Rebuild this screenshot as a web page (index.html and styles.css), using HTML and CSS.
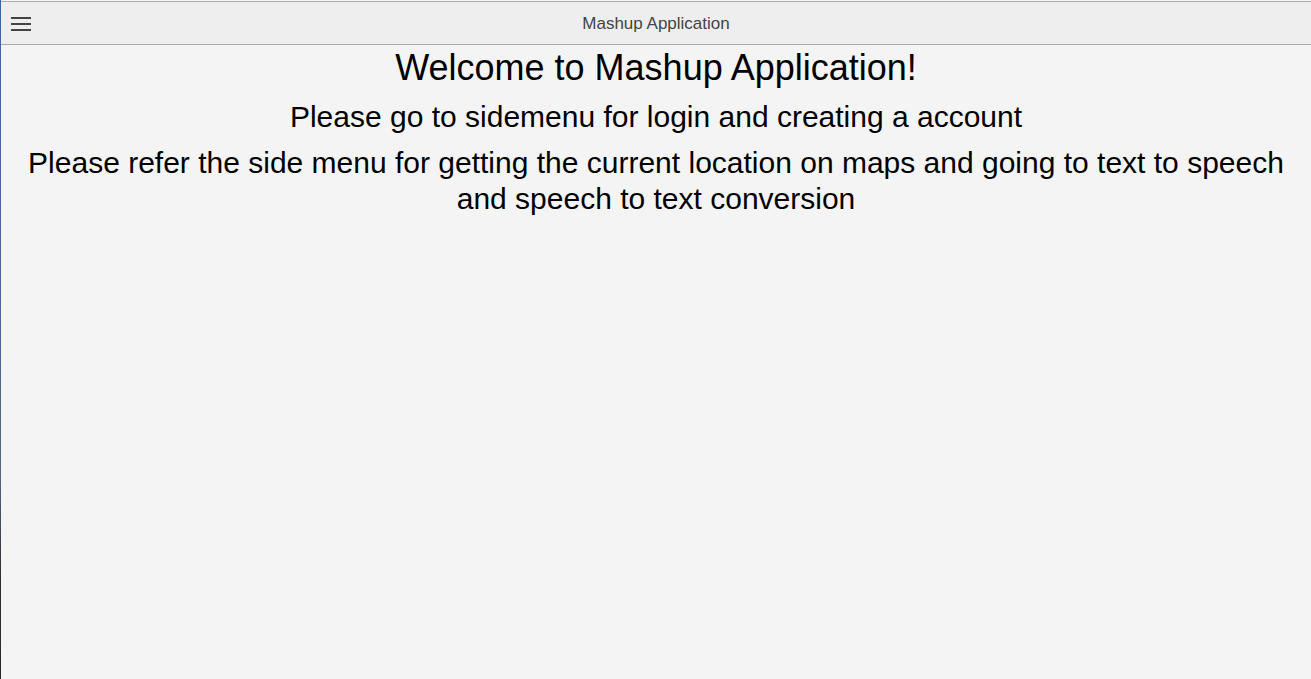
FILE: index.html
```html
<!DOCTYPE html>
<html>
<head>
<meta charset="utf-8">
<link rel="stylesheet" href="styles.css">
</head>
<body>
<div class="app">
  <header class="toolbar">
    <button class="menu-btn" aria-label="menu">
      <svg width="20" height="14" viewBox="0 0 20 14"><rect x="0" y="0" width="20" height="2" fill="#444"/><rect x="0" y="6" width="20" height="2" fill="#444"/><rect x="0" y="12" width="20" height="2" fill="#444"/></svg>
    </button>
    <div class="title">Mashup Application</div>
  </header>
  <main class="content">
    <h1 class="h1">Welcome to Mashup Application!</h1>
    <h2 class="h2 first">Please go to sidemenu for login and creating a account</h2>
    <h2 class="h2 second">Please refer the side menu for getting the current location on maps and going to text to speech and speech to text conversion</h2>
  </main>
</div>
</body>
</html>
```
FILE: styles.css
```css
html, body { margin: 0; padding: 0; height: 100%; }
body { background: #f4f4f4; font-family: "Liberation Sans", Arial, sans-serif; }
.app {
  height: 100%;
  box-sizing: border-box;
  padding-top: 1px;
  border-left: 1px solid #3b65a0;
  border-image: linear-gradient(#3d66a3, #4a6899 45%, #56667f 70%, #2e2e2e 85%, #2a2a2a 100%) 1;
  border-left-width: 1px;
  border-left-style: solid;
  display: flex;
  flex-direction: column;
}
.toolbar {
  position: relative;
  flex: none;
  height: 40px;
  padding-top: 2px;
  background: #eeeeee;
  border-top: 1px solid #aaaaaa;
  border-bottom: 1px solid #aaaaaa;
  display: flex;
  align-items: center;
  justify-content: center;
}
.menu-btn {
  position: absolute;
  left: 10px;
  top: 15px;
  padding: 0;
  border: 0;
  background: none;
  width: 20px;
  height: 14px;
  display: block;
}
.menu-btn svg { display: block; }
.title { font-size: 17px; color: #444; }
.content { flex: 1; background: #f4f4f4; text-align: center; color: #000; padding: 0 8px; }
.h1 { font-size: 36px; font-weight: normal; margin: 2px 0 0; line-height: 42px; }
.h2 { font-size: 30px; font-weight: normal; line-height: 36px; }
.h2.first { margin: 10px 0 0; }
.h2.second { margin: 10px 0 0; }
```
